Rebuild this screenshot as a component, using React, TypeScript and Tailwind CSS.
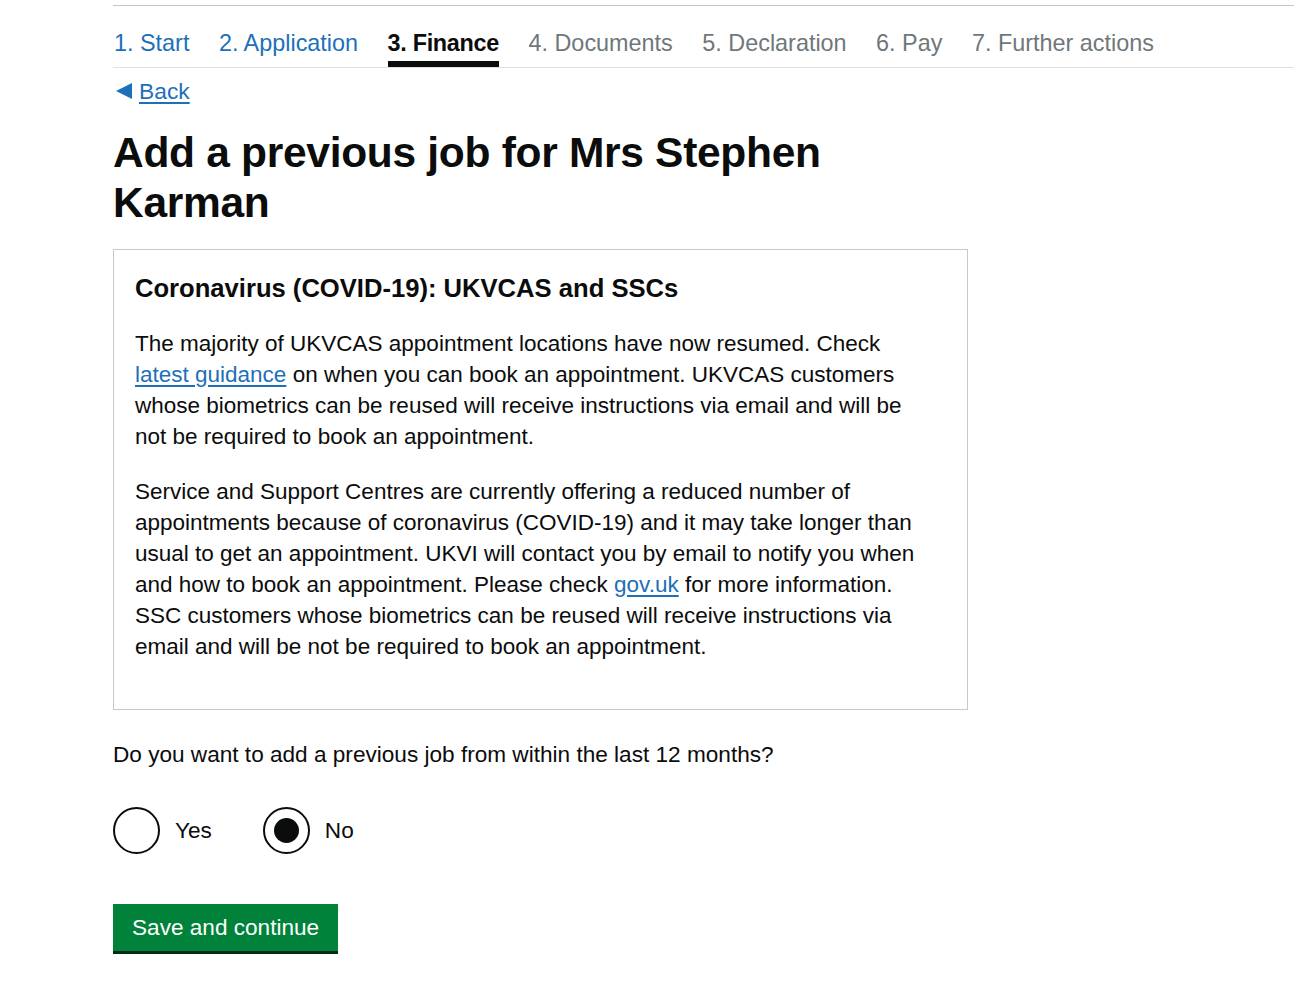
const steps = [
  { label: "1. Start", state: "done" },
  { label: "2. Application", state: "done" },
  { label: "3. Finance", state: "current" },
  { label: "4. Documents", state: "todo" },
  { label: "5. Declaration", state: "todo" },
  { label: "6. Pay", state: "todo" },
  { label: "7. Further actions", state: "todo" },
];

const Radio = ({ label, checked }: { label: string; checked?: boolean }) => (
  <label className="flex items-center gap-[15px]">
    <span className="flex h-[47px] w-[47px] items-center justify-center rounded-full border-2 border-[#0b0c0c]">
      {checked && <span className="h-[25px] w-[25px] rounded-full bg-[#0b0c0c]" />}
    </span>
    <span className="text-[22.6px]">{label}</span>
  </label>
);

export default function App() {
  return (
    <div
      className="min-h-screen bg-white pt-[5px] pl-[113px] text-[#0b0c0c]"
      style={{ fontFamily: '"Liberation Sans", Arial, sans-serif' }}
    >
      <div className="border-t border-[#c4c6c8]">
        <nav className="flex h-[62px] items-end gap-[29.5px] border-b border-[#e0e0e0] pl-px">
          {steps.map((s) => (
            <span
              key={s.label}
              className={
                s.state === "current"
                  ? "border-b-[6px] border-[#0b0c0c] pb-[4px] text-[23.4px] leading-[28px] font-bold tracking-[-0.3px] text-[#0b0c0c]"
                  : s.state === "done"
                  ? "border-b-[6px] border-transparent pb-[4px] text-[23.4px] leading-[28px] text-[#1d70b8]"
                  : "border-b-[6px] border-transparent pb-[4px] text-[23.4px] leading-[28px] text-[#6f777b]"
              }
            >
              {s.label}
            </span>
          ))}
        </nav>
      </div>

      <div className="w-[855px]">
        <a href="#" className="mt-[6px] flex items-center gap-[7px] text-[22.8px] text-[#1d70b8]">
          <svg width="16" height="16" viewBox="0 0 16 16" className="ml-[3px]">
            <polygon points="0,8 16,0 16,16" fill="#1d70b8" />
          </svg>
          <span className="underline underline-offset-[3px]">Back</span>
        </a>

        <h1 className="mt-[20px] text-[42.5px] leading-[50px] font-bold tracking-[-0.3px]">
          Add a previous job for Mrs Stephen Karman
        </h1>

        <div className="mt-[21px] border border-[#c8c8c8] px-[21px] pt-[21px] pb-[47px]">
          <h2 className="text-[25.6px] leading-[34px] font-bold">
            Coronavirus (COVID-19): UKVCAS and SSCs
          </h2>
          <p className="mt-[23px] text-[22.5px] leading-[31px]">
            The majority of UKVCAS appointment locations have now resumed. Check
            <br />
            <a href="#" className="text-[#1d70b8] underline underline-offset-[3px]">
              latest guidance
            </a>{" "}
            on when you can book an appointment. UKVCAS customers
            <br />
            whose biometrics can be reused will receive instructions via email and will be
            <br />
            not be required to book an appointment.
          </p>
          <p className="mt-[24px] text-[22.5px] leading-[31px]">
            Service and Support Centres are currently offering a reduced number of
            <br />
            appointments because of coronavirus (COVID-19) and it may take longer than
            <br />
            usual to get an appointment. UKVI will contact you by email to notify you when
            <br />
            and how to book an appointment. Please check{" "}
            <a href="#" className="text-[#1d70b8] underline underline-offset-[3px]">
              gov.uk
            </a>{" "}
            for more information.
            <br />
            SSC customers whose biometrics can be reused will receive instructions via
            <br />
            email and will be not be required to book an appointment.
          </p>
        </div>

        <p className="mt-[31px] text-[22.6px] leading-[28px]">
          Do you want to add a previous job from within the last 12 months?
        </p>

        <div className="mt-[38px] flex gap-[51px]">
          <Radio label="Yes" />
          <Radio label="No" checked />
        </div>

        <button className="mt-[50px] h-[47px] bg-[#00823b] px-[19px] text-[22.6px] text-white shadow-[0_3px_0_#002d18]">
          Save and continue
        </button>
      </div>
    </div>
  );
}
